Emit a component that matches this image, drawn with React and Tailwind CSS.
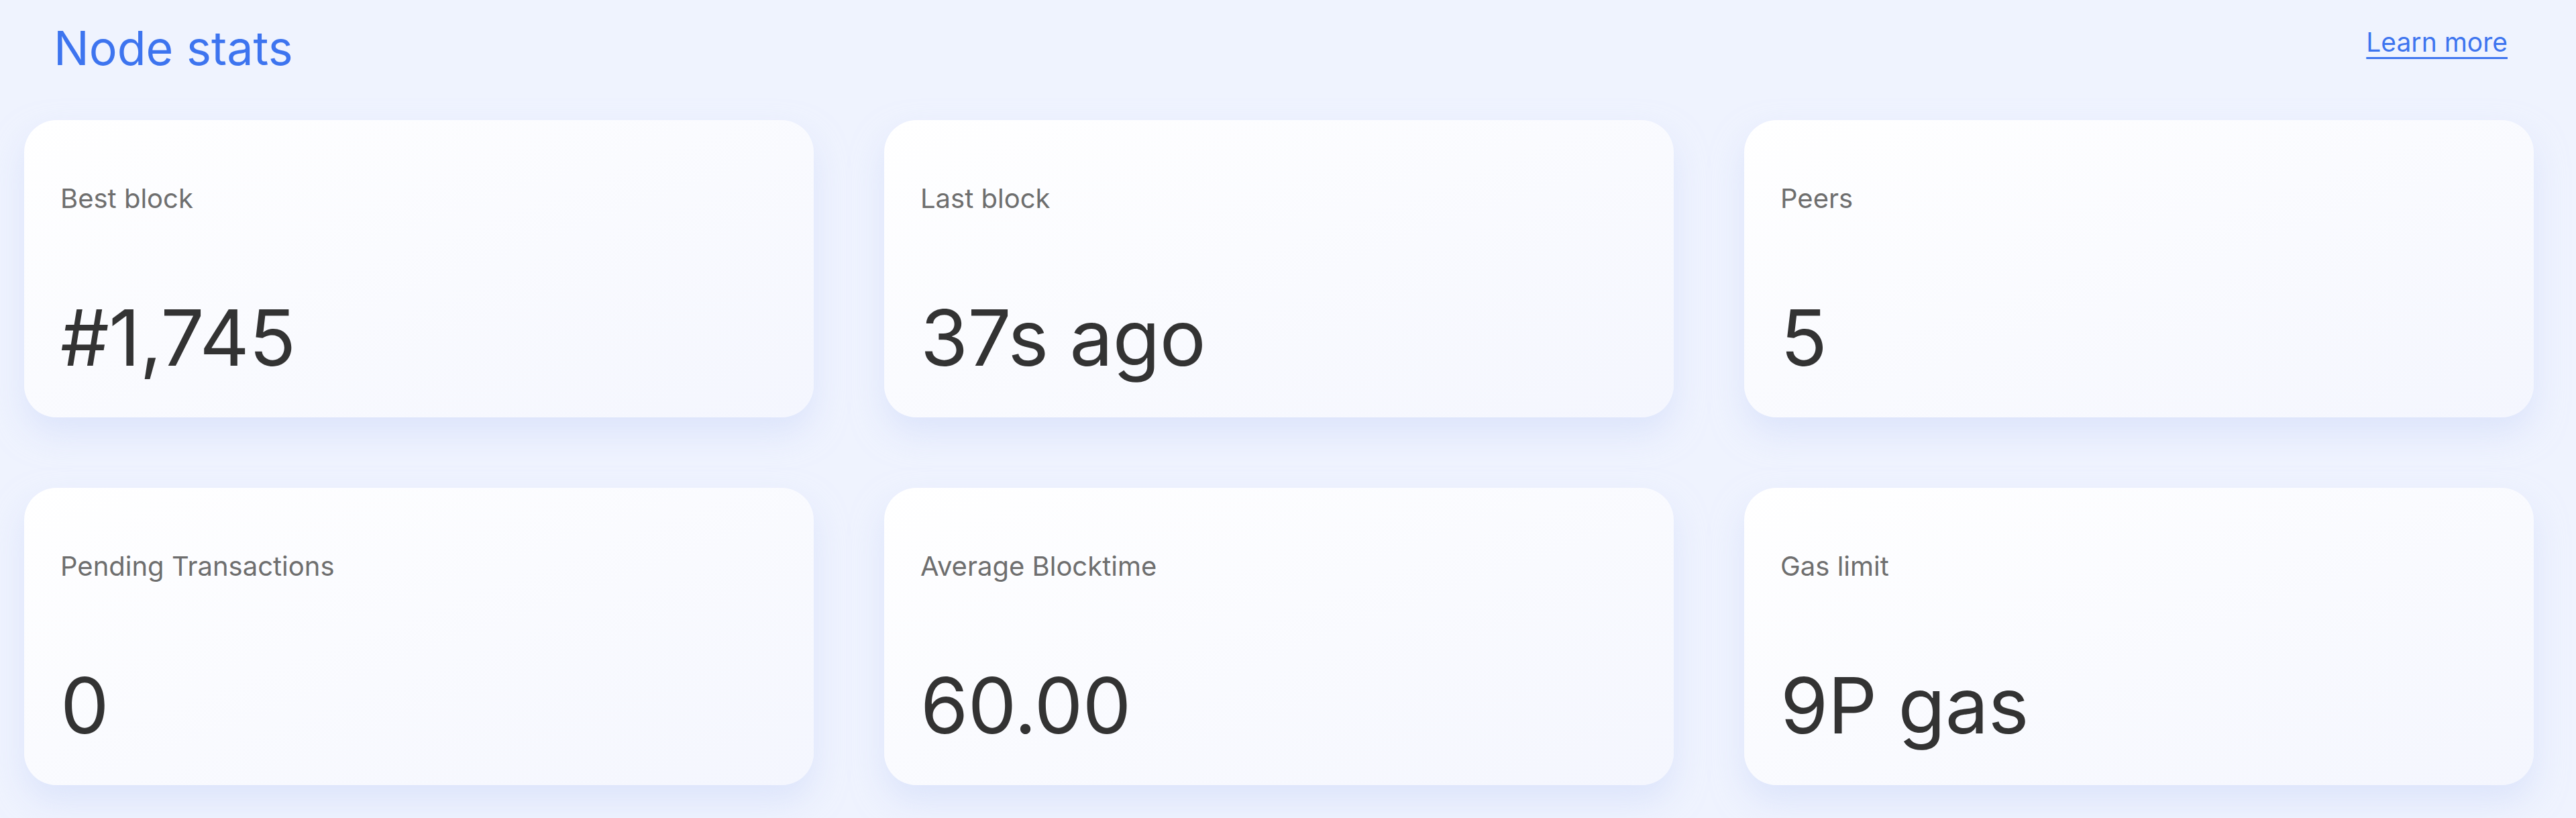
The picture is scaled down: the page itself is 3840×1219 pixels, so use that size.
import React from "react";

const stats = [
  { label: "Best block", value: "#1,745" },
  { label: "Last block", value: "37s ago" },
  { label: "Peers", value: "5" },
  { label: "Pending Transactions", value: "0" },
  { label: "Average Blocktime", value: "60.00" },
  { label: "Gas limit", value: "9P gas" },
];

function Card({ label, value }) {
  return (
    <div className="h-[443px] rounded-[48px] bg-gradient-to-br from-white to-[#f4f6fe] shadow-[0_24px_48px_rgba(205,216,250,0.55)] pl-[54px] pt-[93px]">
      <div className="text-[40px] leading-[48px] text-[#6e6e6e]">{label}</div>
      <div className="mt-[119px] text-[115px] leading-[130px] text-[#333333] tracking-[-0.5px]">{value}</div>
    </div>
  );
}

export default function App() {
  return (
    <div
      className="min-h-[1219px] w-full bg-[#eff3fe]"
      style={{ fontFamily: "Inter, 'Noto Sans', sans-serif" }}
    >
      <div className="flex items-start justify-between pl-[80px] pr-[102px] pt-[30px]">
        <h1 className="text-[70px] leading-[84px] font-normal text-[#3d74ef]">Node stats</h1>
        <a href="#" className="mt-[9px] text-[39px] leading-[47px] text-[#3d74ef] underline underline-offset-[8px] decoration-[3px]">
          Learn more
        </a>
      </div>
      <div className="grid grid-cols-3 gap-x-[105px] gap-y-[105px] pl-[36px] pr-[63px] pt-[65px] pb-[51px]">
        {stats.map((s) => (
          <Card key={s.label} {...s} />
        ))}
      </div>
    </div>
  );
}
